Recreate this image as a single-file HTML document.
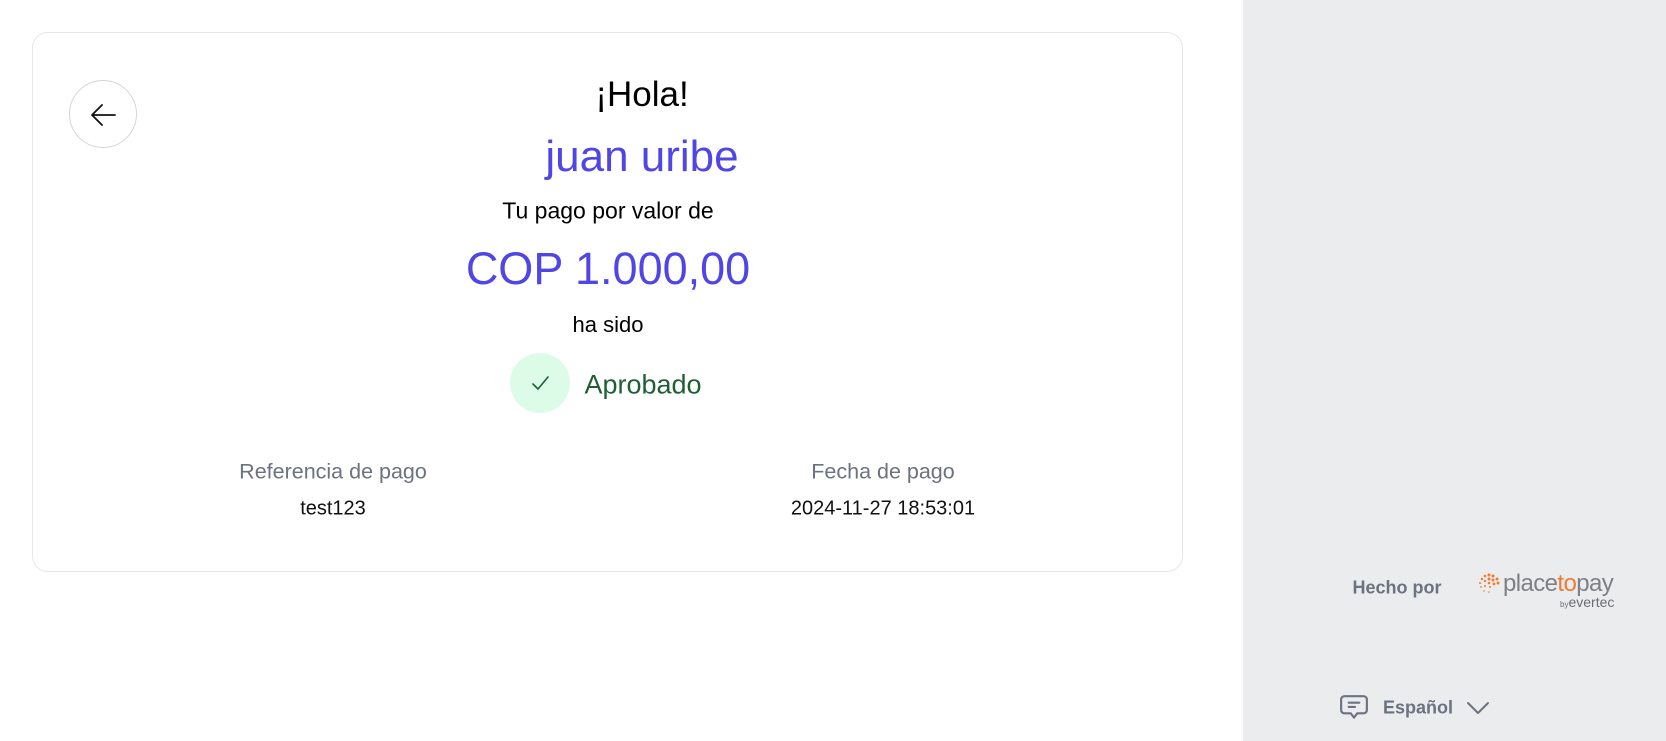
<!DOCTYPE html>
<html><head><meta charset="utf-8"><style>
*{margin:0;padding:0;box-sizing:border-box}
body{width:1666px;height:741px;background:#fff;font-family:"Liberation Sans",sans-serif;position:relative;overflow:hidden}
.side{position:absolute;left:1243px;top:0;width:423px;height:741px;background:#ebecee}
.card{position:absolute;left:32px;top:32px;width:1151px;height:540px;border:1px solid #e5e7eb;border-radius:16px}
.back{position:absolute;left:69px;top:80px;width:68px;height:68px;border:1px solid #d6d6da;border-radius:50%}
.t{position:absolute;white-space:nowrap;transform:translate(-50%,-50%)}
</style></head><body>
<div class="card"></div>
<div class="back"><svg width="68" height="68" viewBox="0 0 68 68"><path d="M45 34H22M32 24L22 34L32 44" fill="none" stroke="#111" stroke-width="1.8" stroke-linecap="round" stroke-linejoin="round"/></svg></div>
<div class="t" style="left:642px;top:95px;font-size:35px;color:#000">¡Hola!</div>
<div class="t" style="left:642px;top:157px;font-size:44px;color:#5046e5">juan uribe</div>
<div class="t" style="left:608px;top:211px;font-size:23px;color:#000">Tu pago por valor de</div>
<div class="t" style="left:608px;top:269px;font-size:45px;color:#5046e5">COP 1.000,00</div>
<div class="t" style="left:608px;top:325px;font-size:22px;color:#000">ha sido</div>
<div style="position:absolute;left:510px;top:353px;width:60px;height:60px;border-radius:50%;background:#dcfce7"><svg width="60" height="60"><path d="M23 31l5 5 10-12" fill="none" stroke="#166534" stroke-width="1.6" stroke-linecap="round" stroke-linejoin="round"/></svg></div>
<div class="t" style="left:643px;top:385px;font-size:27px;color:#1f5f33">Aprobado</div>
<div class="t" style="left:333px;top:472px;font-size:21.5px;color:#6b7280">Referencia de pago</div>
<div class="t" style="left:333px;top:509px;font-size:20px;color:#111">test123</div>
<div class="t" style="left:883px;top:472px;font-size:21.5px;color:#6b7280">Fecha de pago</div>
<div class="t" style="left:883px;top:509px;font-size:20px;color:#111">2024-11-27 18:53:01</div>
<div class="side"></div>
<div class="t" style="left:1397px;top:588px;font-size:18px;font-weight:bold;color:#6b7280">Hecho por</div>
<svg style="position:absolute;left:1477px;top:572px" width="24" height="24"><g fill="#f07a32"><circle cx="12" cy="3" r="1.5"/><circle cx="16" cy="4" r="1.5"/><circle cx="20" cy="7" r="1.5"/><circle cx="8" cy="4" r="1.3"/><circle cx="5" cy="7" r="1.2"/><circle cx="12" cy="7" r="1.5"/><circle cx="16" cy="8" r="1.5"/><circle cx="21" cy="11" r="1.5"/><circle cx="3" cy="11" r="1"/><circle cx="8" cy="9" r="1.2"/><circle cx="12" cy="11" r="1.3"/><circle cx="17" cy="12" r="1.4"/><circle cx="4" cy="15" r=".9"/><circle cx="8" cy="14" r="1"/><circle cx="13" cy="15" r="1"/><circle cx="7" cy="19" r=".8"/><circle cx="12" cy="20" r=".8"/></g></svg>
<div style="position:absolute;left:1503px;top:570px;font-size:24px;color:#7d8087;letter-spacing:-0.6px">place<span style="color:#f07a32">to</span>pay</div>
<div style="position:absolute;left:1560px;top:594px;font-size:14px;color:#6b6e75"><span style="font-size:8px">by</span>evertec</div>
<svg style="position:absolute;left:1339px;top:693px" width="30" height="30" viewBox="0 0 28 28"><path d="M5 3h18a3 3 0 0 1 3 3v10a3 3 0 0 1-3 3h-6l-3 4-3-4H5a3 3 0 0 1-3-3V6a3 3 0 0 1 3-3z" fill="none" stroke="#6b7280" stroke-width="2" stroke-linejoin="round"/><path d="M9 9h10M9 13h6" stroke="#6b7280" stroke-width="2" stroke-linecap="round"/></svg>
<div class="t" style="left:1418px;top:708px;font-size:18px;font-weight:bold;color:#6b7280">Español</div>
<svg style="position:absolute;left:1466px;top:700px" width="24" height="16"><path d="M2 3l10 10 10-10" fill="none" stroke="#6b7280" stroke-width="2" stroke-linecap="round" stroke-linejoin="round"/></svg>
</body></html>
